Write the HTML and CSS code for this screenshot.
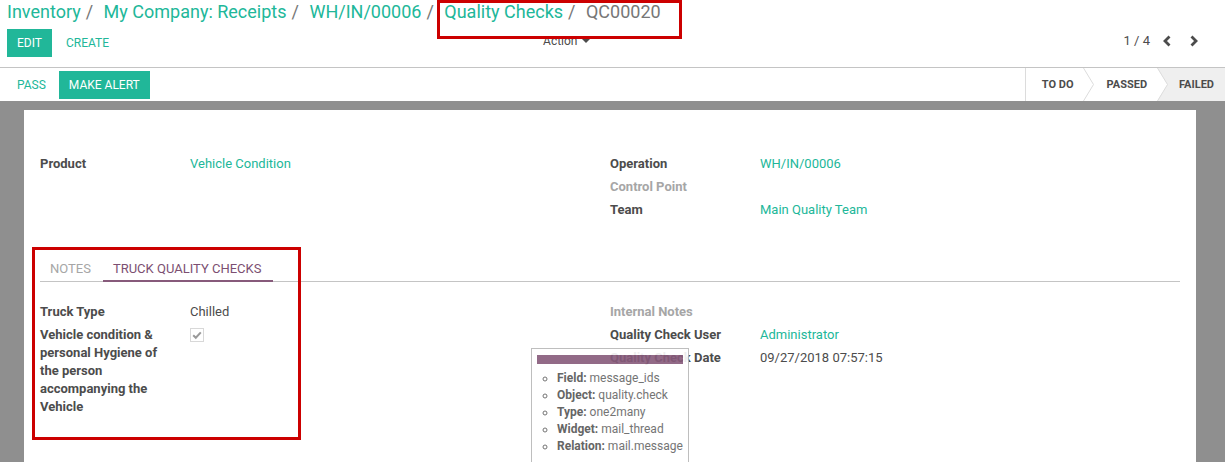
FILE: index.html
```html
<!DOCTYPE html>
<html>
<head>
<meta charset="utf-8">
<link rel="stylesheet" href="styles.css">
</head>
<body>
<div class="cp">
  <ol class="breadcrumb">
    <li><a>Inventory</a></li>
    <li><a>My Company: Receipts</a></li>
    <li><a>WH/IN/00006</a></li>
    <li><a>Quality Checks</a></li>
    <li class="active">QC00020</li>
  </ol>
  <div class="cp-row2">
    <div class="cp-left">
      <button class="btn btn-primary">EDIT</button>
      <button class="btn btn-link">CREATE</button>
      <div class="sidebar">Action <span class="caret"></span></div>
    </div>
    <div class="cp-right">
      <div class="pager">
        <span class="pager-value">1 / 4</span>
        <svg class="chev" width="10" height="12" viewBox="0 0 10 12"><polyline points="7.5,1.5 3,6 7.5,10.5" fill="none" stroke="#4c4c4c" stroke-width="2.8"/></svg>
        <svg class="chev" width="10" height="12" viewBox="0 0 10 12"><polyline points="2.5,1.5 7,6 2.5,10.5" fill="none" stroke="#4c4c4c" stroke-width="2.8"/></svg>
      </div>
    </div>
  </div>
</div>

<div class="statusbar">
  <div class="sb-buttons">
    <button class="btn btn-link">PASS</button>
    <button class="btn btn-primary">MAKE ALERT</button>
  </div>
  <div class="sb-status">
    <span class="st st-todo">TO DO</span>
    <svg class="arrow" width="11" height="33" viewBox="0 0 11 33"><polyline points="0.5,0 10.5,16.5 0.5,33" fill="none" stroke="#dcdcdc" stroke-width="1"/></svg>
    <span class="st st-passed">PASSED</span>
    <svg class="arrow" width="11" height="33" viewBox="0 0 11 33"><polygon points="0,0 11,0 11,33 0,33 10.5,16.5" fill="#efefef"/><polyline points="0.5,0 10.5,16.5 0.5,33" fill="none" stroke="#dcdcdc" stroke-width="1"/></svg>
    <span class="st st-failed">FAILED</span>
  </div>
</div>

<div class="form-bg">
  <div class="sheet">
    <div class="cols">
      <div class="grid">
        <div class="lbl">Product</div><div class="val link">Vehicle Condition</div>
      </div>
      <div class="grid">
        <div class="lbl">Operation</div><div class="val link">WH/IN/00006</div>
        <div class="lbl empty">Control Point</div><div class="val"></div>
        <div class="lbl">Team</div><div class="val link">Main Quality Team</div>
      </div>
    </div>

    <div class="notebook">
      <ul class="tabs">
        <li class="tab">NOTES</li>
        <li class="tab active">TRUCK QUALITY CHECKS</li>
      </ul>
      <div class="cols tab-content">
        <div class="grid">
          <div class="lbl">Truck Type</div><div class="val">Chilled</div>
          <div class="lbl wrap">Vehicle condition &amp; personal Hygiene of the person accompanying the Vehicle</div>
          <div class="val"><span class="checkbox"><svg width="12" height="12" viewBox="0 0 12 12"><polyline points="2.2,6.3 4.8,8.8 9.8,3.4" fill="none" stroke="#9a9a9a" stroke-width="2"/></svg></span></div>
        </div>
        <div class="grid">
          <div class="lbl empty">Internal Notes</div><div class="val"></div>
          <div class="lbl">Quality Check User</div><div class="val link">Administrator</div>
          <div class="lbl">Quality Check Date</div><div class="val">09/27/2018 07:57:15</div>
        </div>
      </div>
    </div>
  </div>
</div>

<div class="annot annot-top"></div>
<div class="annot annot-tabs"></div>

<div class="tooltip">
  <div class="tip-title"></div>
  <ul class="tip-list">
    <li><b>Field:</b> message_ids</li>
    <li><b>Object:</b> quality.check</li>
    <li><b>Type:</b> one2many</li>
    <li><b>Widget:</b> mail_thread</li>
    <li><b>Relation:</b> mail.message</li>
  </ul>
</div>
</body>
</html>
```

FILE: styles.css
```css
html, body {
  margin: 0;
  padding: 0;
  height: 462px;
  overflow: hidden;
}
body {
  font-family: Roboto, "Noto Sans", sans-serif;
  font-size: 13px;
  line-height: 18px;
  color: #4c4c4c;
  background: #fff;
  position: relative;
}

/* ---------- control panel ---------- */
.cp {
  padding: 0 7px 10px 7px;
  border-bottom: 1px solid #c4c4c4;
  height: 57px;
}
.breadcrumb {
  list-style: none;
  margin: 0;
  padding: 0;
  display: flex;
  font-size: 18px;
  line-height: 24px;
  height: 24px;
}
.breadcrumb li + li::before {
  content: "/\00a0";
  padding: 0 6px 0 5px;
  color: #777;
}
.breadcrumb a {
  color: #21b799;
}
.breadcrumb .active {
  color: #777;
}
.cp-row2 {
  display: flex;
  margin-top: 5px;
  height: 28px;
}
.cp-left {
  width: 50%;
  display: flex;
  align-items: flex-start;
}
.cp-right {
  width: 50%;
  display: flex;
  justify-content: flex-end;
}
.btn {
  font-family: inherit;
  font-size: 12px;
  line-height: 18px;
  padding: 5px 10px;
  border: 0;
  border-radius: 0;
  margin: 0;
  cursor: pointer;
}
.btn-primary {
  background: #21b799;
  color: #fff;
}
.btn-link {
  background: transparent;
  color: #21b799;
}
.cp-left .btn-link {
  margin-left: 4px;
}
.sidebar {
  margin-left: auto;
  margin-right: 23px;
  font-size: 12px;
  line-height: 18px;
  padding: 3px 0;
  color: #4c4c4c;
  display: flex;
  align-items: center;
}
.caret {
  display: inline-block;
  width: 0;
  height: 0;
  margin-left: 4px;
  border-top: 4px solid #4c4c4c;
  border-left: 4px solid transparent;
  border-right: 4px solid transparent;
}
.pager {
  display: flex;
  align-items: center;
  height: 24px;
  margin-right: 19px;
}
.pager-value {
  font-size: 13px;
  margin-right: 12px;
}
.chev {
  display: block;
}
.chev + .chev {
  margin-left: 17px;
}

/* ---------- status bar ---------- */
.statusbar {
  display: flex;
  height: 33px;
  padding-left: 7px;
}
.sb-buttons {
  display: flex;
  align-items: center;
  gap: 3px;
  padding-top: 1px;
}
.sb-status {
  margin-left: auto;
  display: flex;
  height: 33px;
  border-left: 1px solid #dcdcdc;
}
.arrow {
  display: block;
}
.st {
  font-size: 11px;
  font-weight: bold;
  line-height: 34px;
  color: #4c4c4c;
  white-space: nowrap;
}
.st-todo {
  padding: 0 9px 0 16px;
}
.st-passed {
  padding: 0 10px 0 13px;
}
.st-failed {
  padding: 0 11px 0 11px;
  background: #efefef;
}

/* ---------- form ---------- */
.form-bg {
  background: #8f8f8f;
  padding: 9px 29px 0 24px;
  height: 361px;
  box-sizing: border-box;
}
.sheet {
  background: #fff;
  padding: 43px 16px 0 16px;
  height: 352px;
  box-sizing: border-box;
}
.cols {
  display: grid;
  grid-template-columns: 1fr 1fr;
}
.grid {
  display: grid;
  grid-template-columns: 150px 1fr;
  align-content: start;
}
.lbl {
  font-weight: bold;
  padding: 2px 8px 3px 0;
  min-height: 18px;
}
.lbl.wrap {
  padding-right: 16px;
}
.lbl.empty {
  color: #a6a6a6;
}
.val {
  padding: 2px 0 3px 0;
  min-height: 18px;
}
.link {
  color: #21b799;
}

.notebook {
  margin-top: 33px;
}
.tabs {
  list-style: none;
  margin: 0;
  padding: 0;
  display: flex;
  border-bottom: 1px solid #c4c4c4;
}
.tab {
  padding: 5px 10px 2px 10px;
  line-height: 18px;
  margin-right: 2px;
  margin-bottom: -1px;
  border-bottom: 2px solid transparent;
  color: #a6a6a6;
}
.tab.active {
  color: #7c4f72;
  border-bottom-color: #875a7b;
  padding-right: 12px;
}
.tab-content {
  margin-top: 19px;
}
.checkbox {
  display: flex;
  align-items: center;
  justify-content: center;
  width: 12px;
  height: 12px;
  border: 1px solid #d8d8d8;
  background: #fff;
  margin-top: 2px;
}
.checkbox svg {
  display: block;
}

/* ---------- annotation overlays ---------- */
.annot {
  position: absolute;
  border: 3px solid #cc0000;
  box-sizing: border-box;
  pointer-events: none;
}
.annot-top {
  left: 437px;
  top: 0;
  width: 245px;
  height: 39px;
}
.annot-tabs {
  left: 32px;
  top: 247px;
  width: 269px;
  height: 193px;
}

/* ---------- tooltip ---------- */
.tooltip {
  position: absolute;
  left: 531px;
  top: 348px;
  width: 158px;
  height: 114px;
  box-sizing: border-box;
  background: #fff;
  border: 1px solid #b8b8b8;
  border-bottom: 0;
  padding: 6px 5px 0 5px;
  opacity: 0.9;
  font-size: 12px;
  line-height: 17px;
  color: #666;
  overflow: hidden;
}
.tip-title {
  height: 9px;
  background: #875a7b;
}
.tip-list {
  margin: 6px 0 0 0;
  padding: 0 0 0 20px;
  list-style: circle;
  white-space: nowrap;
}
.tip-list b {
  color: #555;
}
```
